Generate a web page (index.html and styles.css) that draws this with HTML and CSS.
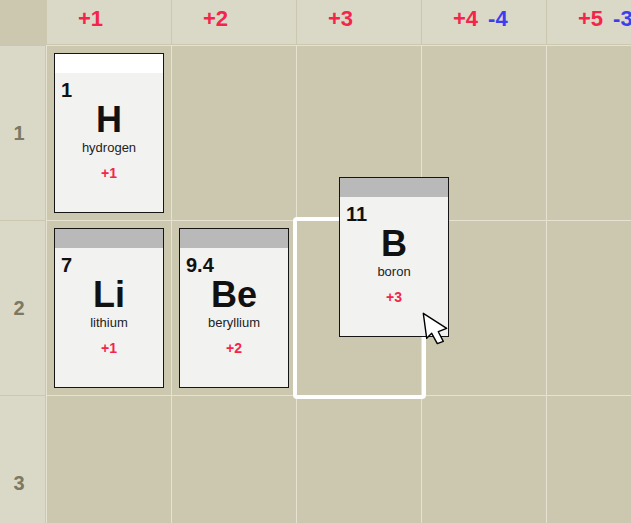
FILE: index.html
```html
<!DOCTYPE html>
<html>
<head>
<meta charset="utf-8">
<link rel="stylesheet" href="styles.css">
</head>
<body>
<div class="board">
  <div class="corner"></div>
  <div class="hd"><span class="pos">+1</span></div>
  <div class="hd"><span class="pos">+2</span></div>
  <div class="hd"><span class="pos">+3</span></div>
  <div class="hd"><span class="pos">+4</span><span class="neg">-4</span></div>
  <div class="hd"><span class="pos">+5</span><span class="neg">-3</span></div>

  <div class="rl">1</div>
  <div class="cell">
    <div class="card fresh">
      <div class="strip"></div>
      <div class="num">1</div>
      <div class="sym">H</div>
      <div class="name">hydrogen</div>
      <div class="val">+1</div>
    </div>
  </div>
  <div class="cell"></div>
  <div class="cell"></div>
  <div class="cell"></div>
  <div class="cell"></div>

  <div class="rl">2</div>
  <div class="cell">
    <div class="card">
      <div class="strip"></div>
      <div class="num">7</div>
      <div class="sym">Li</div>
      <div class="name">lithium</div>
      <div class="val">+1</div>
    </div>
  </div>
  <div class="cell">
    <div class="card">
      <div class="strip"></div>
      <div class="num">9.4</div>
      <div class="sym">Be</div>
      <div class="name">beryllium</div>
      <div class="val">+2</div>
    </div>
  </div>
  <div class="cell target"></div>
  <div class="cell"></div>
  <div class="cell"></div>

  <div class="rl">3</div>
  <div class="cell"></div>
  <div class="cell"></div>
  <div class="cell"></div>
  <div class="cell"></div>
  <div class="cell"></div>

  <div class="card dragging">
    <div class="strip"></div>
    <div class="num">11</div>
    <div class="sym">B</div>
    <div class="name">boron</div>
    <div class="val">+3</div>
  </div>

  <svg class="pointer" width="32" height="40" viewBox="0 0 32 40">
    <polygon points="3.3,3.3 6.7,28.3 11.7,23.3 17.3,33.6 23.3,31.4 18.3,21.7 26.7,18.3" fill="#fff" stroke="#000" stroke-width="1.4" stroke-linejoin="round"/>
  </svg>
</div>
</body>
</html>
```

FILE: styles.css
```css
html, body {
  margin: 0;
  padding: 0;
  overflow: hidden;
  background: #ccc7af;
}

.board {
  position: relative;
  display: grid;
  grid-template-columns: 46px repeat(5, 125px);
  grid-template-rows: 45px repeat(3, 175px);
  width: 671px;
  background: #ccc7af;
  font-family: "Liberation Sans", Arial, sans-serif;
}

.corner {
  background: #ccc7af;
}

.hd {
  box-sizing: border-box;
  background: #dad8c6;
  border-left: 1px solid #ccc7af;
  border-bottom: 1px solid #ccc7af;
  padding: 6px 0 0 31px;
  font-weight: bold;
  font-size: 22px;
  line-height: 26px;
  white-space: nowrap;
}

.pos { color: #f5244a; }
.neg { color: #3c3cf0; margin-left: 10px; }

.rl {
  box-sizing: border-box;
  background: #dad8c6;
  border-top: 1px solid #ccc7af;
  border-right: 1px solid #ccc7af;
  padding-right: 7px;
  display: flex;
  align-items: center;
  justify-content: center;
  font-weight: bold;
  font-size: 20px;
  color: #7b7963;
}

.cell {
  box-sizing: border-box;
  border-left: 1px solid #e5e2d2;
  border-top: 1px solid #e5e2d2;
  padding: 7px;
}

.cell.target {
  position: relative;
}

.cell.target::after {
  content: "";
  position: absolute;
  left: -4px;
  top: -4px;
  right: -5px;
  bottom: -4px;
  border: 4px solid #ffffff;
  border-radius: 4px;
  z-index: 1;
}

.card {
  box-sizing: border-box;
  width: 110px;
  height: 160px;
  border: 1px solid #151515;
  background: #f2f2f1;
  display: flex;
  flex-direction: column;
  align-items: center;
  color: #111;
}

.card.dragging {
  position: absolute;
  left: 339px;
  top: 177px;
  z-index: 2;
}

.strip {
  align-self: stretch;
  height: 19px;
  background: #b9b9b9;
}

.card.fresh .strip {
  background: #ffffff;
}

.num {
  align-self: stretch;
  margin-top: 7px;
  padding: 0 6px;
  font-weight: bold;
  font-size: 20px;
  line-height: 20px;
}

.sym {
  margin-top: 2px;
  font-weight: bold;
  font-size: 36px;
  line-height: 36px;
}

.name {
  margin-top: 2px;
  font-size: 13px;
  line-height: 15px;
  color: #222222;
}

.val {
  margin-top: 10px;
  font-weight: bold;
  font-size: 14px;
  line-height: 16px;
  color: #f5244a;
}

.pointer {
  position: absolute;
  left: 420px;
  top: 310px;
  z-index: 3;
}
```
